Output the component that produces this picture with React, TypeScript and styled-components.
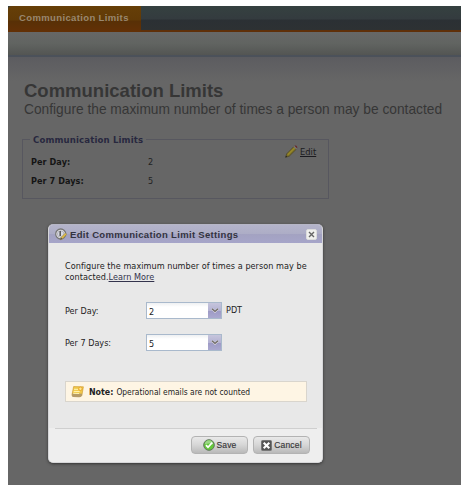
import React from "react";
import styled, { createGlobalStyle } from "styled-components";

const GlobalStyle = createGlobalStyle`
  * { box-sizing: border-box; }
  body { margin: 0; background: #fff; }
  h1, h2, p, dl, dt, dd { margin: 0; }
`;

const tahoma = `"DejaVu Sans Condensed", "DejaVu Sans", sans-serif`;
const arial = `"Liberation Sans", Arial, sans-serif`;

const Frame = styled.div`
  width: 464px;
  height: 489px;
  padding: 6px 3px 4px 8px;
  background: #fff;
  overflow: hidden;
`;
const Page = styled.main`
  position: relative;
  height: 479px;
  background: #666;
  font-family: ${tahoma};
`;
const TabBar = styled.header`
  height: 26px;
  display: flex;
  border-bottom: 2px solid #5f2f08;
  background: linear-gradient(#354140 0, #343b3f 13px, #2b3034 14px, #2d3133 100%);
`;
const Tab = styled.div`
  width: 133px;
  height: 26px;
  padding-left: 11px;
  border-top-left-radius: 4px;
  background: linear-gradient(#663f08 0, #613a07 14px, #583006 15px, #633006 100%);
  color: #99876f;
  font: bold 9.5px/24px ${arial};
  letter-spacing: 0.37px;
  white-space: nowrap;
`;
const ToolStrip = styled.div`
  height: 25px;
  border-bottom: 2px solid #4b515a;
  background: linear-gradient(#676767, #616461 50%, #535553);
`;
const Content = styled.section`
  height: 428px;
  padding: 23px 0 0 14px;
  background: linear-gradient(#5c5c60, #666 24px);
`;
const Title = styled.h1`
  padding-left: 2px;
  font: bold 18.5px/22px ${arial};
  color: #363636;
  white-space: nowrap;
`;
const Subtitle = styled.p`
  padding-left: 2px;
  font: 13.75px/16px ${arial};
  color: #363636;
  white-space: nowrap;
`;
const LimitsPanel = styled.section`
  display: grid;
  grid-template-columns: 1fr 43px;
  grid-template-rows: 5px 1fr;
  width: 307px;
  height: 60px;
  margin-top: 21px;
  border: 1px solid #57575f;
`;
const LimitsLegend = styled.h2`
  grid-column: 1 / -1;
  justify-self: start;
  height: 12px;
  margin: -6px 0 0 7px;
  padding: 0 3px 0 3px;
  background: #666;
  color: #28283f;
  font: bold 9.5px/12px ${tahoma};
  letter-spacing: 0.15px;
  white-space: nowrap;
`;
const LimitList = styled.dl`
  display: grid;
  grid-template-columns: 117px 1fr;
  grid-auto-rows: 19px;
  align-content: start;
  padding: 8px 0 0 8px;
  font-size: 9px;
  line-height: 18px;
  color: #222;
  dt { font-weight: bold; color: #151515; letter-spacing: 0.08px; }
`;
const EditLink = styled.a`
  display: flex;
  align-items: flex-start;
  gap: 2px;
  color: #1b1b20;
  font-size: 9.3px;
  line-height: 12px;
  svg { flex: none; }
  span { text-decoration: underline; padding-top: 1px; }
`;
const Dialog = styled.div`
  position: absolute;
  left: 40px;
  top: 218px;
  width: 275px;
  height: 239px;
  display: flex;
  flex-direction: column;
  border: 1px solid #d6d6d8;
  border-top-color: #b6b6c6;
  border-radius: 5px;
  background: #e8e8e8;
  box-shadow: 0 1px 3px #333;
  overflow: hidden;
  color: #222;
`;
const DialogHeader = styled.div`
  height: 18px;
  display: flex;
  align-items: center;
  padding: 1px 5px 0 6px;
  gap: 3px;
  background: linear-gradient(#b4b4ca, #adadc6 48%, #a3a2c1 50%, #a6a5c9);
`;
const DialogTitle = styled.h2`
  flex: 1;
  font: bold 9.5px/16px ${arial};
  letter-spacing: 0.32px;
  color: #333340;
  white-space: nowrap;
`;
const CloseButton = styled.button`
  width: 11px;
  height: 11px;
  padding: 0;
  display: grid;
  place-items: center;
  border: 1px solid #ddd;
  border-radius: 2px;
  background: #f0f0ee;
`;
const DialogBody = styled.div`
  height: 185px;
  padding: 18px 15px 0 16px;
`;
const Description = styled.p`
  height: 41px;
  font-size: 9px;
  line-height: 11px;
  letter-spacing: 0.055px;
  white-space: nowrap;
`;
const LearnMore = styled.a`
  color: #33334d;
  text-decoration: underline;
`;
const Field = styled.div`
  height: 32px;
  display: grid;
  grid-template-columns: 81px 76px 1fr;
  align-items: start;
  font-size: 9px;
  line-height: 16px;
`;
const FieldLabel = styled.label`
  padding-top: 1px;
`;
const Select = styled.div`
  height: 17px;
  display: flex;
  border: 1px solid #a9b9cc;
  background: linear-gradient(#eef0f2, #fff 4px);
  color: #222;
  span { flex: 1; padding: 1px 0 0 2px; }
`;
const Trigger = styled.div`
  width: 13px;
  display: grid;
  place-items: center;
  background: linear-gradient(#c6c5dc, #b4b2d3 50%, #9d9ac5 52%, #aaa8cf);
`;
const Suffix = styled.div`
  padding-left: 4px;
`;
const Note = styled.div`
  height: 21px;
  display: flex;
  align-items: center;
  margin-top: 15px;
  padding-left: 5px;
  border: 1px solid #d9d5cd;
  background: #fef5e4;
  font-size: 8.4px;
  white-space: nowrap;
  svg { flex: none; margin-right: 5px; }
  strong { margin-right: 3px; font-size: 8.8px; }
`;
const DialogFooter = styled.div`
  flex: 1;
  display: flex;
  justify-content: flex-end;
  gap: 5px;
  padding: 8px 12px 0 0;
  background: linear-gradient(#cfcfcf, #cfcfcf) 6px 0 / 262px 1px no-repeat #eee;
`;
const Button = styled.button`
  width: 57px;
  height: 18px;
  display: flex;
  align-items: center;
  justify-content: center;
  gap: 2px;
  padding: 0;
  border: 1px solid #b3b3b3;
  border-radius: 4px;
  background: linear-gradient(#e9e9e9, #d6d6d6 50%, #b9b9b9);
  color: #383838;
  font: 8.5px/16px ${arial};
  letter-spacing: 0.15px;
  -webkit-text-stroke: 0.15px #333;
`;

const PencilIcon = () => (
  <svg width="13" height="13" viewBox="0 0 13 13">
    <path d="M.6 12.3 1.7 8.8 8.8 1.6l2.6 2.5-7.2 7.1z" fill="#7b7026" stroke="#433d24" strokeWidth=".6" />
    <path d="m2.8 9.7 7-7" stroke="#988829" strokeWidth="1.3" />
    <path d="m8.4 1.8 1-1 2.8 2.8-1 1z" fill="#777779" />
    <path d="M9.4.8q1-.8 2 0 1.3 1 .8 2.8z" fill="#68272a" />
    <path d="m.5 12.4.5-1.7 1.2 1.1z" fill="#202020" />
  </svg>
);
const GaugeIcon = () => (
  <svg width="12" height="13" viewBox="0 0 12 13">
    <circle cx="5.7" cy="6" r="5" fill="#eee" stroke="#777" strokeWidth="1.3" />
    <circle cx="5.7" cy="6" r="3.3" fill="#d6d8e0" stroke="#9997a4" strokeWidth=".6" />
    <path d="M5.2 3v5" stroke="#555" strokeWidth="1.5" />
    <path d="m5.3 11.8.7-2.4 4.4-4.5 1.4 1.4-4.4 4.6z" fill="#dfbc43" stroke="#8a7952" strokeWidth=".5" />
    <path d="m5.3 11.8.7-2.4 1.5 1.4z" fill="#555" />
  </svg>
);
const CloseIcon = () => (
  <svg width="7" height="7" viewBox="0 0 7 7">
    <path d="m1 1 5 5m0-5L1 6" stroke="#666" strokeWidth="1.4" />
  </svg>
);
const ChevronIcon = () => (
  <svg width="8" height="5" viewBox="0 0 8 5">
    <path d="m1 .7 3 3 3-3" fill="none" stroke="#e4e0e4" strokeWidth="2" />
    <path d="m1 .7 3 2.7 3-2.7" fill="none" stroke="#6d6966" strokeWidth="1.4" />
  </svg>
);
const NoteIcon = () => (
  <svg width="13" height="12" viewBox="0 0 13 12">
    <path d="m2.6.6 9.8.2-1.6 9-9.9-.5z" fill="#f1c94c" stroke="#c99425" strokeWidth=".6" />
    <path d="m.9 9.3.5-2 9.8.4-.4 2.1q-1 1.7-3 1.5L2 11q-1.3-.3-1.1-1.7z" fill="#b69b68" />
    <path d="m3 3.3 4 .1m-4.3 2 6 .2M2.2 7.3l6 .2" stroke="#fff4b2" strokeWidth="1" />
    <circle cx="9.4" cy="2.8" r="1.7" fill="#ffe58e" stroke="#e6a021" strokeWidth=".8" />
  </svg>
);
const SaveIcon = () => (
  <svg width="12" height="12" viewBox="0 0 12 12">
    <circle cx="6" cy="6" r="5.3" fill="#64c83b" stroke="#5f775b" strokeWidth="1" />
    <path d="M1.8 5.4a4.2 4.2 0 0 1 8.4 0q-4-2-8.4 0" fill="#9bd786" />
    <path d="m3 6.1 2 2.2 4.2-4.7" fill="none" stroke="#fff" strokeWidth="1.7" />
  </svg>
);
const CancelIcon = () => (
  <svg width="11" height="11" viewBox="0 0 11 11">
    <rect x=".5" y=".5" width="10" height="10" rx="1" fill="#555" stroke="#777" />
    <path d="m2.7 2.7 5.6 5.6m0-5.6L2.7 8.3" stroke="#fff" strokeWidth="2.1" />
  </svg>
);

const limits = [
  { label: "Per Day:", value: "2", suffix: "PDT" },
  { label: "Per 7 Days:", value: "5", suffix: "" },
];

export default function App() {
  return (
    <Frame>
      <GlobalStyle />
      <Page>
        <TabBar><Tab>Communication Limits</Tab></TabBar>
        <ToolStrip />
        <Content>
          <Title>Communication Limits</Title>
          <Subtitle>Configure the maximum number of times a person may be contacted</Subtitle>
          <LimitsPanel>
            <LimitsLegend>Communication Limits</LimitsLegend>
            <LimitList>
              {limits.map(({ label, value }) => (
                <React.Fragment key={label}><dt>{label}</dt><dd>{value}</dd></React.Fragment>
              ))}
            </LimitList>
            <EditLink><PencilIcon /><span>Edit</span></EditLink>
          </LimitsPanel>
        </Content>
        <Dialog role="dialog">
          <DialogHeader>
            <GaugeIcon />
            <DialogTitle>Edit Communication Limit Settings</DialogTitle>
            <CloseButton aria-label="Close"><CloseIcon /></CloseButton>
          </DialogHeader>
          <DialogBody>
            <Description>
              Configure the maximum number of times a person may be<br />
              contacted.<LearnMore>Learn More</LearnMore>
            </Description>
            {limits.map(({ label, value, suffix }) => (
              <Field key={label}>
                <FieldLabel>{label}</FieldLabel>
                <Select><span>{value}</span><Trigger><ChevronIcon /></Trigger></Select>
                <Suffix>{suffix}</Suffix>
              </Field>
            ))}
            <Note><NoteIcon /><strong>Note:</strong>Operational emails are not counted</Note>
          </DialogBody>
          <DialogFooter>
            <Button><SaveIcon />Save</Button>
            <Button><CancelIcon />Cancel</Button>
          </DialogFooter>
        </Dialog>
      </Page>
    </Frame>
  );
}
